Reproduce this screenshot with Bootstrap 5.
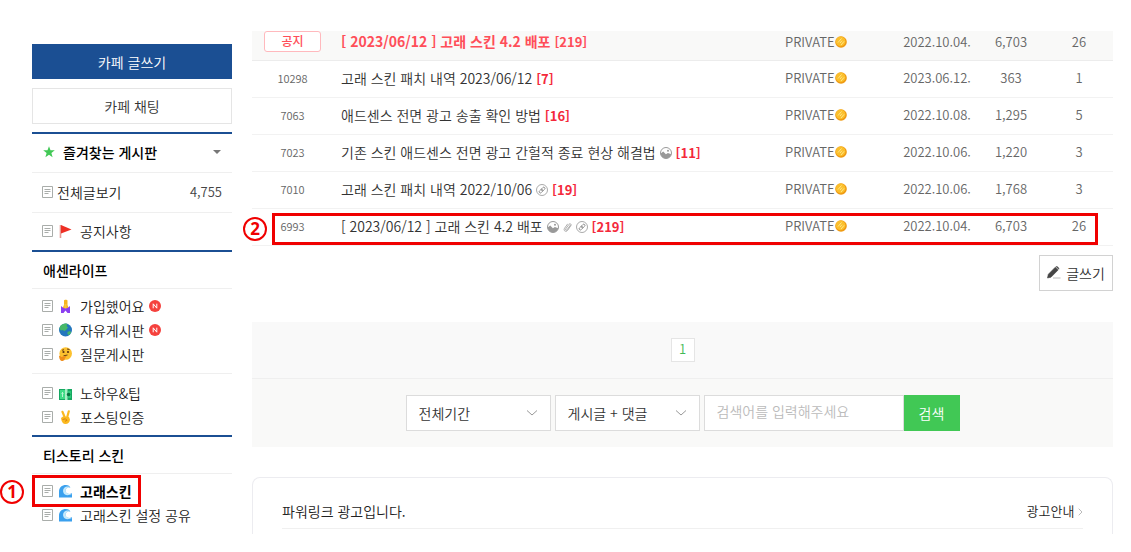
<!DOCTYPE html>
<html lang="ko">
<head>
<meta charset="utf-8">
<meta name="viewport" content="width=device-width, initial-scale=1">
<title>고래 스킨 게시판</title>
<link href="https://cdn.jsdelivr.net/npm/bootstrap@5.3.0/dist/css/bootstrap.min.css" rel="stylesheet">
<style>
:root{--blue:#1b4f93;--green:#41c855;--line:#efefef;--mark:#f00000}
body{font-family:"Noto Sans CJK KR",sans-serif;font-size:14px;font-weight:350;line-height:20px;color:#222;background:#fff}
a{color:inherit;text-decoration:none}
svg{flex:none}
.page-wrap{padding:31px 18px 16px 32px;gap:20px}
.side{width:200px;flex:none;padding-top:13px}
.side .btn,.main .btn{border-radius:0;font-size:14px;line-height:20px;padding:0;font-weight:350}
.btn-post{background:var(--blue);color:#fff;height:35px}
.side .btn-chat{border:1px solid #e5e5e5;height:36px;color:#333;margin:9px 0 8px}
.side-head{border-top:2px solid var(--blue);border-bottom:1px solid var(--line);font-size:14px;font-weight:500;color:#000;padding:0 11px;height:39px;margin:0;line-height:20px}
.side-head.fav{height:41px;padding-bottom:2px}
.side-row{border-bottom:1px solid var(--line);height:40px;padding:0 10px 2px}
.side-row.last{border:0;height:37px}
.total{font-size:13px;color:#444}
.menu{list-style:none;margin:0;padding:5px 10px 7px}
.menu + .menu{border-top:1px solid var(--line);padding:7px 10px 6px}
.menu a,.side-row a{display:flex;align-items:center;height:24px}
.ico-doc{margin-right:6px}
.ico-em{margin-right:8px}
.ico-new{margin-left:5px}
.hit{position:absolute;border:3px solid var(--mark);pointer-events:none}
.num{position:absolute;width:24px;height:24px;border:2px solid var(--mark);border-radius:50%;color:var(--mark);font:700 17px/20px "Open Sans",sans-serif;text-align:center}
.hit-menu{left:0;top:1px;width:109px;height:32px}
.num-menu{left:-32px;top:6px}
.main{min-width:0}
.board{table-layout:fixed;width:100%;margin:0}
.board td{height:37px;padding:0 0 1px;text-align:center;vertical-align:middle;border-bottom:1px solid #f2f2f2;color:#666;font-size:13px;white-space:nowrap}
.board .t,.board .w{padding-left:8px;text-align:left}
.board .t{font-size:14px;color:#333;overflow:hidden}
.board .n{font-size:11px}
.board svg{vertical-align:-1px}
.board .t b{color:#f4293b;font-size:13px;font-weight:700}
.board .notice td{height:29px;background:#f9f9f8;padding-bottom:7px;border-color:#ececec}
.board .notice .t a,.board .notice .t b{color:#ff4e59;font-weight:700}
.tag{display:block;width:57px;height:21px;margin:0 auto;border:1px solid #ffb9bd;border-radius:3px;background:#fff;color:#ff4e59;font-size:12px;line-height:18px;font-weight:500}
.hit-row{left:20px;right:15px;bottom:1px;height:32px}
.num-row{left:-9px;bottom:5px}
.main .btn-write{border:1px solid #d2d2d2;width:74px;height:36px;color:#333;margin:9px 0 31px;gap:5px}
.pager{background:#f9f9f9;height:57px;border-bottom:1px solid var(--line)}
.pager a{width:24px;height:24px;border:1px solid #e5e5e5;background:#fff;color:#41b955;line-height:20px;text-align:center;font-size:13px}
.finder{background:#f9f9f8;height:68px;gap:4px}
.finder .form-select,.finder .form-control{height:36px;border:1px solid #dcdcdc;border-radius:0;font-size:14px;line-height:20px;font-weight:350;padding:0 12px;color:#333;background-color:#fff}
.finder .form-select{width:145px;background-image:url("data:image/svg+xml,%3Csvg xmlns='http://www.w3.org/2000/svg' viewBox='0 0 12 12'%3E%3Cpath d='M1 3.5l5 4.5 5-4.5' fill='none' stroke='%23999'/%3E%3C/svg%3E");background-size:12px;background-position:right 12px center}
.finder .form-control{width:200px;padding-bottom:4px}
.finder .form-control::placeholder{color:#bbb;opacity:1}
.main .btn-find{width:56px;height:36px;background:var(--green);color:#fff}
.ad{margin-top:30px;border:1px solid #ececf0;border-bottom:0;border-radius:8px 8px 0 0;padding:18px 29px 5px}
.ad-head{height:33px;padding-bottom:2px;border-bottom:1px solid #f0f0f0}
.ad-head a{font-size:13px}
</style>
</head>
<body>
<svg width="0" height="0" class="position-absolute" aria-hidden="true">
  <symbol id="doc" viewBox="0 0 11 12"><path d="M.5.5h10v11H.5z" fill="#fff" stroke="#a9adaa"/><path d="M2.500 3.500h6M2.500 5.500h6M2.500 7.500h4" stroke="#a9adaa"/></symbol>
  <symbol id="new" viewBox="0 0 12 12"><circle cx="6" cy="6" r="6" fill="#f5413d"/><path d="M4.200 8.300V3.800l3.600 4.400V3.700" fill="none" stroke="#fff"/></symbol>
  <symbol id="wave" viewBox="0 0 14 14"><path d="M0 14V8C0 3 3 .5 7.500 .5c2.500 0 4.300 1.200 4.700 3.200-1-.7-2.200-.8-3.200-.3C6.500 4.500 6.300 8 8.500 9.500c1.500 1 3.500.8 5.500 0V14z" fill="#3aa0ee"/><path d="M12.200 3.700C11 2 8 1.600 6 3.300 4 5 3.800 8.600 6 10.500c2 1.500 5 1.200 8-.2-2.300.1-4.600-.1-5.800-1.300C6.500 7 7 4 9 3.400c1-.4 2.200-.3 3.200.3z" fill="#c5e9fb"/></symbol>
  <symbol id="coin" viewBox="0 0 12 12"><circle cx="6" cy="6" r="5.800" fill="#ef9a12"/><circle cx="5.600" cy="5.400" r="4.800" fill="#fbbf2c"/><path d="M3 6.500l3.500-4M6 9l3-3.600M5 7l2-2.400" stroke="#fff0a0" stroke-width=".8"/></symbol>
  <symbol id="pic" viewBox="0 0 12 12"><circle cx="6" cy="6" r="5.500" fill="#fff" stroke="#999"/><path d="M.7 6.500l2.500-2 2.700 2.700 2-1.200 3.400 1.300A5.400 5.400 0 0 1 .7 6.500z" fill="#999"/><circle cx="8" cy="3.800" r="1" fill="#999"/></symbol>
  <symbol id="link" viewBox="0 0 12 12"><circle cx="6" cy="6" r="5.500" fill="none" stroke="#aaa"/><g fill="none" stroke="#888" stroke-width=".9"><rect x="2.400" y="4.900" width="4.200" height="2.400" rx="1.200" transform="rotate(-45 6 6)"/><rect x="5.400" y="4.900" width="4.200" height="2.400" rx="1.200" transform="rotate(-45 6 6)"/></g></symbol>
  <symbol id="clip" viewBox="0 0 9 12"><path d="M7.500 4L4 8.800c-.7 1-2 .1-1.300-.9L6 3.300C7 2 8.800 3.200 7.900 4.600L4.600 9.400C3 11.500 0 9.700 1.500 7.300L4.700 2.800" fill="none" stroke="#999" stroke-width=".8"/></symbol>
</svg>
<div class="page-wrap d-flex">
  <aside class="side">
    <button type="button" class="btn btn-post w-100 d-block">카페 글쓰기</button>
    <button type="button" class="btn btn-chat w-100 d-block">카페 채팅</button>
    <h2 class="side-head fav d-flex align-items-center"><svg width="12" height="12" viewBox="0 0 12 12"><path d="M6 .3l1.500 4H11.800L8.400 6.900l1.200 4.400L6 8.700l-3.600 2.600 1.200-4.400L.2 4.300h4.300z" fill="#41c855"/></svg><span class="ms-2">즐겨찾는 게시판</span><svg class="ms-auto" width="8" height="4" viewBox="0 0 8 4"><path d="M0 0h8L4 4z" fill="#777"/></svg></h2>
    <div class="side-row d-flex align-items-center"><a href="#"><svg class="ico-doc me-1" width="11" height="12"><use href="#doc"/></svg>전체글보기</a><span class="total ms-auto">4,755</span></div>
    <div class="side-row last d-flex align-items-center"><a href="#"><svg class="ico-doc" width="11" height="12"><use href="#doc"/></svg><svg class="ico-em" width="13" height="14" viewBox="0 0 13 14"><path d="M1.500 1v13" stroke="#e59a94" stroke-width="1.600"/><path d="M2 1l10.500 4.500L2 9.500z" fill="#ee2f24"/></svg>공지사항</a></div>
    <h2 class="side-head d-flex align-items-center">애센라이프</h2>
    <ul class="menu">
      <li><a href="#"><svg class="ico-doc" width="11" height="12"><use href="#doc"/></svg><svg class="ico-em" width="13" height="14" viewBox="0 0 13 14"><path d="M5 1.500C5 .5 8.500 .5 8.500 1.500V6l1.500 4H3.200L5 6z" fill="#f5b51e"/><path d="M2 7l2.500 2h4L11 7v7H8.500L6.500 11.500 4.500 14H2z" fill="#8b3ff0"/><path d="M5.500 5h2v4.500h-2z" fill="#fbc63a"/></svg>가입했어요<svg class="ico-new" width="12" height="12"><use href="#new"/></svg></a></li>
      <li><a href="#"><svg class="ico-doc" width="11" height="12"><use href="#doc"/></svg><svg class="ico-em" width="13" height="14" viewBox="0 0 13 14"><circle cx="6.500" cy="7" r="6.500" fill="#2477bd"/><path d="M1 3.500C3 .5 7 .2 8.500 1l-1 2 1.500 1.500-2 2.500-1.500 1L3.500 7 2 7.500.5 6z" fill="#46b868"/><path d="M8.500 9l2.500-1 1.200 1.500L10 12.300 8.500 11z" fill="#46b868"/></svg>자유게시판<svg class="ico-new" width="12" height="12"><use href="#new"/></svg></a></li>
      <li><a href="#"><svg class="ico-doc" width="11" height="12"><use href="#doc"/></svg><svg class="ico-em" width="13" height="14" viewBox="0 0 13 14"><circle cx="6.700" cy="6.500" r="6.300" fill="#fcc12e"/><circle cx="4.500" cy="5" r="1.100" fill="#5a3212"/><circle cx="9" cy="5" r="1.100" fill="#5a3212"/><path d="M3 3.300l2-.6M8 2l2.500.5M4.500 8.800l4-.8" stroke="#5a3212" stroke-width=".9"/><path d="M0 9c1-.8 1.800 0 2.200 1l4.500-.9c1 .2.500 1.200 0 1.400l-1 .3C6.500 13 4.500 14 3 14S.3 12.500 0 9z" fill="#ef8d1a"/></svg>질문게시판</a></li>
    </ul>
    <ul class="menu">
      <li><a href="#"><svg class="ico-doc" width="11" height="12"><use href="#doc"/></svg><svg class="ico-em" width="13" height="14" viewBox="0 0 13 14"><path d="M0 3h13v11H0z" fill="#16a862"/><path d="M1 4h5v9H1z" fill="#3fdc86"/><path d="M6 3h2.500v11H6z" fill="#a6efc4"/><path d="M9 5h3v7H9z" fill="#2cc877"/><circle cx="9.600" cy="8.500" r="1.800" fill="#08703f"/><path d="M3.500 6v5M2.500 7.500h2" stroke="#b9f5d2"/></svg>노하우&amp;팁</a></li>
      <li><a href="#"><svg class="ico-doc" width="11" height="12"><use href="#doc"/></svg><svg class="ico-em" width="13" height="14" viewBox="0 0 13 14"><path d="M3.500 1.800L6 8M9.800 1.300L8 8" stroke="#fbb91f" stroke-width="2.200" stroke-linecap="round"/><path d="M2 8l2-1.500 6 .5 1 2.500c0 2.500-2 4.500-4.500 4.500S2.500 12 2 8z" fill="#fbb91f"/><path d="M3.500 9.500l3-.7 1.500 1.500-2 1" stroke="#d8840e" fill="none"/></svg>포스팅인증</a></li>
    </ul>
    <h2 class="side-head d-flex align-items-center">티스토리 스킨</h2>
    <ul class="menu position-relative">
      <li><a href="#" class="fw-bold text-black"><svg class="ico-doc" width="11" height="12"><use href="#doc"/></svg><svg class="ico-em" width="13" height="14"><use href="#wave"/></svg>고래스킨</a></li>
      <li><a href="#"><svg class="ico-doc" width="11" height="12"><use href="#doc"/></svg><svg class="ico-em" width="13" height="14"><use href="#wave"/></svg>고래스킨 설정 공유</a></li>
      <li class="hit hit-menu" aria-hidden="true"></li>
      <li class="num num-menu">1</li>
    </ul>
  </aside>
  <main class="main flex-grow-1">
    <div class="position-relative">
      <table class="board">
        <colgroup><col style="width:81px"><col><col style="width:120px"><col style="width:80px"><col style="width:68px"><col style="width:68px"></colgroup>
        <tbody>
          <tr class="notice"><td><span class="tag">공지</span></td><td class="t"><a href="#">[ 2023/06/12 ] 고래 스킨 4.2 배포 <b>[219]</b></a></td><td class="w">PRIVATE<svg width="12" height="12"><use href="#coin"/></svg></td><td>2022.10.04.</td><td>6,703</td><td>26</td></tr>
          <tr><td class="n">10298</td><td class="t"><a href="#">고래 스킨 패치 내역 2023/06/12 <b>[7]</b></a></td><td class="w">PRIVATE<svg width="12" height="12"><use href="#coin"/></svg></td><td>2023.06.12.</td><td>363</td><td>1</td></tr>
          <tr><td class="n">7063</td><td class="t"><a href="#">애드센스 전면 광고 송출 확인 방법 <b>[16]</b></a></td><td class="w">PRIVATE<svg width="12" height="12"><use href="#coin"/></svg></td><td>2022.10.08.</td><td>1,295</td><td>5</td></tr>
          <tr><td class="n">7023</td><td class="t"><a href="#">기존 스킨 애드센스 전면 광고 간헐적 종료 현상 해결법 <svg width="12" height="12"><use href="#pic"/></svg> <b>[11]</b></a></td><td class="w">PRIVATE<svg width="12" height="12"><use href="#coin"/></svg></td><td>2022.10.06.</td><td>1,220</td><td>3</td></tr>
          <tr><td class="n">7010</td><td class="t"><a href="#">고래 스킨 패치 내역 2022/10/06 <svg width="12" height="12"><use href="#link"/></svg> <b>[19]</b></a></td><td class="w">PRIVATE<svg width="12" height="12"><use href="#coin"/></svg></td><td>2022.10.06.</td><td>1,768</td><td>3</td></tr>
          <tr><td class="n">6993</td><td class="t"><a href="#">[ 2023/06/12 ] 고래 스킨 4.2 배포 <svg width="12" height="12"><use href="#pic"/></svg><svg class="mx-1" width="9" height="12"><use href="#clip"/></svg><svg width="12" height="12"><use href="#link"/></svg> <b>[219]</b></a></td><td class="w">PRIVATE<svg width="12" height="12"><use href="#coin"/></svg></td><td>2022.10.04.</td><td>6,703</td><td>26</td></tr>
        </tbody>
      </table>
      <div class="hit hit-row" aria-hidden="true"></div>
      <div class="num num-row">2</div>
    </div>
    <div class="d-flex justify-content-end">
      <button type="button" class="btn btn-write d-flex align-items-center justify-content-center"><svg width="14" height="13" viewBox="0 0 14 13"><path d="M.5 12l.8-3.700L8.300 1.200l2.800 2.800L4 11.200zM9 .6c.9-.9 3.600 1.600 2.700 2.700z" fill="#444" stroke="#444" stroke-width=".6"/><path d="M6 12h7.500" stroke="#bbb"/></svg>글쓰기</button>
    </div>
    <nav class="pager d-flex align-items-center justify-content-center" aria-label="페이지"><a href="#">1</a></nav>
    <form class="finder d-flex align-items-center justify-content-center">
      <select class="form-select" aria-label="기간"><option>전체기간</option></select>
      <select class="form-select" aria-label="범위"><option>게시글 + 댓글</option></select>
      <div class="d-flex"><input type="text" class="form-control" placeholder="검색어를 입력해주세요" aria-label="검색어"><button type="button" class="btn btn-find">검색</button></div>
    </form>
    <section class="ad">
      <div class="ad-head d-flex align-items-center justify-content-between"><span>파워링크 광고입니다.</span><a href="#">광고안내 <svg width="5" height="8" viewBox="0 0 5 8"><path d="M.7.700L4 4 .7 7.300" fill="none" stroke="#bbb"/></svg></a></div>
    </section>
  </main>
</div>
<script src="https://cdn.jsdelivr.net/npm/bootstrap@5.3.0/dist/js/bootstrap.bundle.min.js"></script>
</body>
</html>
